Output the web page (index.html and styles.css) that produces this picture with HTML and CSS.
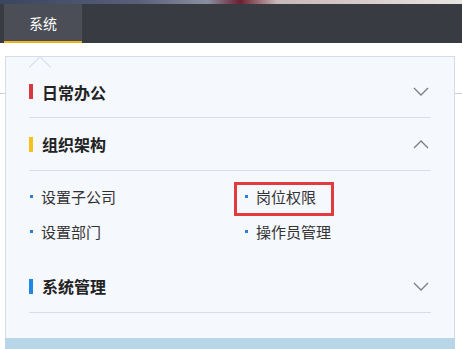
FILE: index.html
```html
<!DOCTYPE html>
<html>
<head>
    <meta charset="utf-8">
    <link rel="stylesheet" href="styles.css">
    <title>系统</title>
</head>
<body>
    <div class="strip"></div>
    <div class="nav">
        <div class="tab">系统</div>
    </div>

    <div class="page">
        <div class="panel">

            <div class="group first">
                <div class="head">
                    <span class="mark red"></span>
                    <span class="name">日常办公</span>
                    <svg class="arrow" width="16" height="9" viewBox="0 0 16 9"><path d="M1 1 L8 8 L15 1" fill="none" stroke="#7a7d84" stroke-width="1.3"/></svg>
                </div>
            </div>

            <div class="group">
                <div class="head">
                    <span class="mark yellow"></span>
                    <span class="name">组织架构</span>
                    <svg class="arrow" width="16" height="9" viewBox="0 0 16 9"><path d="M1 8 L8 1 L15 8" fill="none" stroke="#7a7d84" stroke-width="1.3"/></svg>
                </div>
                <div class="items">
                    <span class="item">设置子公司</span>
                    <span class="item picked">岗位权限</span>
                    <span class="item">设置部门</span>
                    <span class="item">操作员管理</span>
                </div>
            </div>

            <div class="group">
                <div class="head">
                    <span class="mark blue"></span>
                    <span class="name">系统管理</span>
                    <svg class="arrow" width="16" height="9" viewBox="0 0 16 9"><path d="M1 1 L8 8 L15 1" fill="none" stroke="#7a7d84" stroke-width="1.3"/></svg>
                </div>
            </div>

            <div class="bottom-space"></div>
        </div>
        <div class="foot"></div>
    </div>
</body>
</html>
```

FILE: styles.css
```css
body{
    margin: 0;
    background-color: white;
    font-family: "Noto Sans CJK SC", "Liberation Sans", sans-serif;
    overflow: hidden;
}

.strip{
    height: 4px;
    background: linear-gradient(90deg, #3a4560 0%, #5a5f7a 30%, #8a8fa0 45%, #6a2030 52%, #c8b8b8 60%, #e8e4e0 100%);
}

.nav{
    height: 39px;
    background-color: #383b42;
    padding-left: 4px;
    display: flex;
}

.tab{
    width: 78px;
    height: 37px;
    background-color: #4b4e56;
    border-bottom: 2px solid #f0b419;
    color: white;
    font-size: 14px;
    display: flex;
    align-items: center;
    justify-content: center;
}

/* faint line of the page behind the popup */
.page{
    padding: 13px 7px 0 5px;
    background: linear-gradient(180deg, transparent 50px, #cfcfcf 50px, #cfcfcf 51px, transparent 51px);
}

.panel{
    position: relative;
    background-color: #f5f8fd;
    border: 1px solid #d6dde8;
    border-bottom: none;
    padding: 0 23px 0 23px;
}

/* little arrow pointing to the tab */
.panel::before{
    content: "";
    position: absolute;
    left: 34px;
    top: -1px;
    width: 15px;
    height: 15px;
    background-color: #f5f8fd;
    border-left: 1px solid #d6dde8;
    border-top: 1px solid #d6dde8;
    transform: rotate(45deg);
    transform-origin: 0 0;
}

.head{
    height: 52px;
    display: flex;
    align-items: center;
    border-bottom: 1px solid #d9dee6;
}

.first .head{
    height: 51px;
    padding-top: 9px;
}

.mark{
    width: 4px;
    height: 15px;
    margin-right: 9px;
}

.red{ background-color: #d9373f; }
.yellow{ background-color: #f6c21a; }
.blue{ background-color: #1f86e6; }

.name{
    font-size: 16px;
    font-weight: bold;
    color: #222;
    flex: 1;
}

.arrow{
    margin-right: 2px;
}

.items{
    display: grid;
    grid-template-columns: 215px 1fr;
    grid-auto-rows: 35px;
    padding: 8px 0 11px 0;
}

.item{
    position: relative;
    display: flex;
    align-items: center;
    font-size: 15px;
    color: #333;
}

.item::before{
    content: "";
    width: 3px;
    height: 3px;
    background-color: #2b7fd2;
    margin: 0 8px 0 1px;
}

.picked::after{
    content: "";
    position: absolute;
    left: -10px;
    top: 3px;
    width: 94px;
    height: 28px;
    border: 3px solid #e23b3f;
}

.bottom-space{
    height: 25px;
}

.foot{
    height: 14px;
    background-color: #b7d6e7;
}
```
